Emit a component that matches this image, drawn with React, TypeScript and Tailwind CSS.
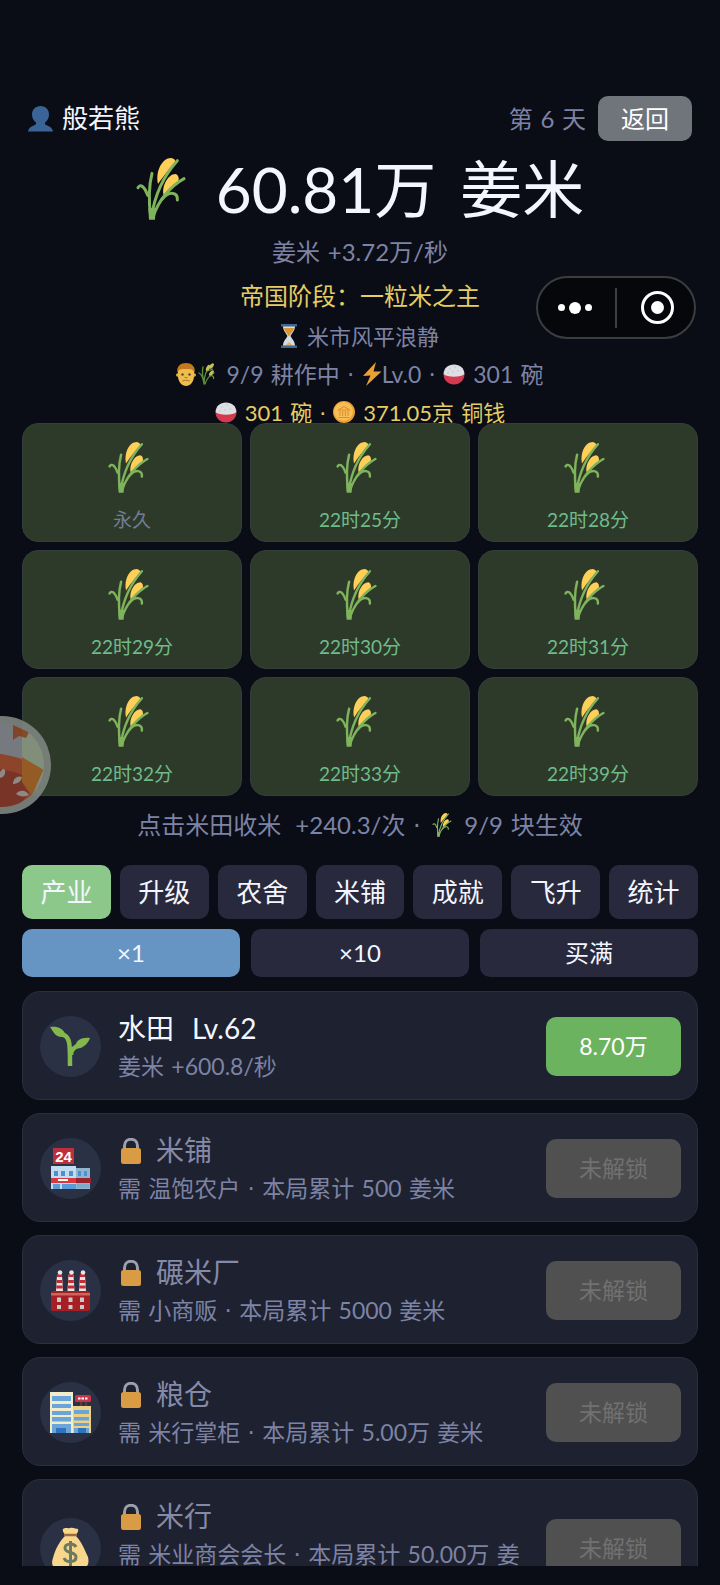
import { Fragment, useState } from "react";
import type { ReactNode } from "react";

type IconProps = { className?: string };

// words separated by a slightly wider blank than Lato's own
function Words({ children }: { children: string }) {
  return (
    <>
      {children.split(/( · | )/).map((part, i) =>
        part.trim() === "" || part === " · " ? (
          <span key={i} className="font-['DejaVu_Sans',sans-serif] leading-none">
            {part}
          </span>
        ) : (
          <Fragment key={i}>{part}</Fragment>
        )
      )}
    </>
  );
}

function Wheat({ className }: IconProps) {
  return (
    <svg viewBox="0 0 150 186" className={className} aria-hidden="true">
      <path d="M66 78C58 40 78 0 105 0C114 1 118 6 118 12C104 28 84 52 66 78Z" fill="#ffcf58" />
      <path d="M83 112C76 82 98 48 118 48C127 50 130 60 127 70C112 82 96 98 83 112Z" fill="#ffcf58" />
      <g fill="none" stroke="#7fb35c" strokeWidth="9" strokeLinecap="round">
        <path d="M44 178C38 130 38 85 48 46" />
        <path d="M46 178C56 112 84 52 124 8" />
        <path d="M51 178C66 128 104 84 144 62" />
        <path d="M6 89C12 78 24 82 35 112" />
        <path d="M78 124C102 96 126 104 124 126" />
      </g>
      <path d="M37 150L59 150L57 185L39 185Z" fill="#7fb35c" />
    </svg>
  );
}

function Sheaf({ className }: IconProps) {
  return (
    <svg viewBox="0 0 18 24" className={className} aria-hidden="true">
      <g fill="none" stroke="#5f8f3c" strokeWidth="1.3" strokeLinecap="round">
        <path d="M6 22C5 15 3 12 1 11M6 22C6 13 9 7 13 3M7 22C9 16 12 13 16 11M6 20C4 13 4 9 5 5" />
      </g>
      <g fill="#c9bf5a">
        <ellipse cx="10" cy="6" rx="1.7" ry="3.4" transform="rotate(25 10 6)" />
        <ellipse cx="13.6" cy="4" rx="1.6" ry="3.2" transform="rotate(35 13.6 4)" />
        <ellipse cx="13.4" cy="11" rx="1.6" ry="3.2" transform="rotate(40 13.4 11)" />
      </g>
      <path d="M12 14C15 13 16 15 15.500 17M9 9L15 7" stroke="#6f9b45" strokeWidth="1.200" fill="none" />
    </svg>
  );
}

function Person({ className }: IconProps) {
  return (
    <svg viewBox="0 0 25 26" className={className} aria-hidden="true">
      <path
        d="M12.500 0C17.500 0 21 3.500 21 8.500C21 12 19.500 14.500 17 16.500V18C17 19.500 24.500 20 25 25.500H0C.5 20 8 19.500 8 18V16.500C5.500 14.500 4 12 4 8.500C4 3.500 7.500 0 12.500 0Z"
        fill="#3a6496"
      />
    </svg>
  );
}

function Hourglass({ className }: IconProps) {
  return (
    <svg viewBox="0 0 16 24" className={className} aria-hidden="true">
      <path d="M2 2H14C14 7 11 9 9.500 12C11 15 14 17 14 22H2C2 17 5 15 6.500 12C5 9 2 7 2 2Z" fill="#d5dde2" />
      <path d="M3 4H13C13 7 10 9 8 12.500C6 9 3 7 3 4Z" fill="#d9952f" />
      <path d="M8 13V18L12.500 22H3.500L8 18Z" fill="#e2b566" />
      <path d="M0 0H16V2.500H0ZM0 21.500H16V24H0Z" fill="#3e678f" />
    </svg>
  );
}

function Farmer({ className }: IconProps) {
  return (
    <svg viewBox="0 0 20 23" className={className} aria-hidden="true">
      <circle cx="1.700" cy="12" r="1.700" fill="#e0ac3c" />
      <circle cx="18.300" cy="12" r="1.700" fill="#e0ac3c" />
      <path d="M2 8C2 3 5 1 10 1S18 3 18 8V13C18 19 14 23 10 23S2 19 2 13Z" fill="#eebd4e" />
      <path d="M1.500 10C0 3 5 0 10 0S20 3 18.500 10C17.500 6 15 6 10 6S2.500 6 1.500 10Z" fill="#c27a1c" />
      <circle cx="6.500" cy="11.500" r="1.200" fill="#5c4428" />
      <circle cx="13.500" cy="11.500" r="1.200" fill="#5c4428" />
      <path d="M8.500 14.500H11.500M6.500 18C8 17 12 17 13.500 18" stroke="#b07a25" strokeWidth="1.200" fill="none" />
    </svg>
  );
}

function Bolt({ className }: IconProps) {
  return (
    <svg viewBox="0 0 20 24" className={className} aria-hidden="true">
      <path d="M14 0L1 14L8.500 13.500L4 24L19.500 9.500L11.500 9.500Z" fill="#eb9f35" />
    </svg>
  );
}

function Bowl({ className }: IconProps) {
  return (
    <svg viewBox="0 0 22 21" className={className} aria-hidden="true">
      <path d="M.5 10C.5 16 5 20.500 11 20.500S21.500 16 21.500 10Z" fill="#d33a50" />
      <path d="M.5 10C1 4 5 .5 11 .5S21 4 21.500 10C18 13.500 4 13.500 .5 10Z" fill="#dcdfe3" />
      <path d="M6 5H8M11 3H13M14 7H16M9 8H11M4 9H6" stroke="#c3c7cc" />
    </svg>
  );
}

function Coin({ className }: IconProps) {
  return (
    <svg viewBox="0 0 22 22" className={className} aria-hidden="true">
      <circle cx="11" cy="11" r="11" fill="#e99c34" />
      <circle cx="10.500" cy="10.500" r="9.500" fill="#f8bd55" />
      <path d="M5 9L11 5.500L17 9ZM7 10V15M9.700 10V15M12.300 10V15M15 10V15M5.500 16.500H16.500" stroke="#d98f2e" fill="none" />
    </svg>
  );
}

function Lock({ className }: IconProps) {
  return (
    <svg viewBox="0 0 26 26" className={className} aria-hidden="true">
      <path d="M6.500 12V8C6.500 -1 19.500 -1 19.500 8V12" fill="none" stroke="#9aa1ad" strokeWidth="3" />
      <rect x="3" y="10" width="20" height="16" rx="2.500" fill="#d99c45" />
    </svg>
  );
}

function Seedling() {
  return (
    <svg viewBox="0 0 61 61" className="size-full" aria-hidden="true">
      <g fill="#84b84e">
        <path d="M10 11C17 10 23 12 26 19C28 21 26 22 22 21C15 21 13 15 10 11Z" />
        <path d="M50 22C42 21 36 24 35 31C35 34 46 33 50 22Z" />
      </g>
      <path d="M24 19C30 22 30 28 30 50M31 39C31 34 33 32 39 29" fill="none" stroke="#84b84e" strokeWidth="4.500" />
    </svg>
  );
}

function Store() {
  return (
    <svg viewBox="0 0 61 61" className="size-full" aria-hidden="true">
      <rect x="13" y="10" width="21" height="16" fill="#bd2f3c" />
      <text x="23.500" y="23.500" textAnchor="middle" fontSize="15" fontWeight="700" fontFamily="Liberation Sans" fill="#fff">
        24
      </text>
      <rect x="11" y="28" width="25" height="23" fill="#bfdcf0" />
      <rect x="36" y="30" width="14" height="21" fill="#8fb4cf" />
      <path d="M14 33H18V38H14ZM21 33H25V38H21ZM29 33H33V38H29ZM38 33H41V38H38ZM44 33H47V38H44Z" fill="#4d8fd0" />
      <path d="M11 40H36V45H11Z" fill="#d8393f" />
      <path d="M36 40H51V45H36Z" fill="#9c2230" />
      <path d="M18 42H28" stroke="#fff" strokeWidth="2" />
      <path d="M13 46H20V51H13ZM22 46H36V51H22Z" fill="#5b9ad8" />
      <path d="M37 46H49V50H37Z" fill="#7fa9c9" />
    </svg>
  );
}

function Factory() {
  return (
    <svg viewBox="0 0 61 61" className="size-full" aria-hidden="true">
      {[16, 27.5, 39].map((x) => (
        <g key={x} transform={`translate(${x} 0)`}>
          <path d="M1 15H6L7 31H0Z" fill="#e8e4e2" />
          <path d="M1 14H6V17H1ZM.7 20H6.300V23H.7ZM.3 25.500H6.700V28.500H.3Z" fill="#c42c32" />
          <circle cx="4" cy="12.500" r="2.300" fill="#e4e6e8" />
        </g>
      ))}
      <rect x="11" y="31" width="39" height="20" rx="2" fill="#a51f24" />
      <rect x="11" y="33" width="39" height="2.500" fill="#c9675a" />
      <path
        d="M17 37.500H21V42H17ZM28.500 37.500H32.500V42H28.500ZM40 37.500H44V42H40ZM17 45H21V49H17ZM28.500 45H32.500V49H28.500ZM40 45H44V49H40Z"
        fill="#ccc9c6"
      />
    </svg>
  );
}

function Building() {
  return (
    <svg viewBox="0 0 61 61" className="size-full" aria-hidden="true">
      <path d="M10 10H33V51H10Z" fill="#f1ecc9" />
      <path d="M33 24H51V51H33Z" fill="#ecd184" />
      <path d="M12 14H31V19H12ZM12 22H31V26H12ZM12 29H31V33H12ZM12 35H31V39.500H12ZM12 42H31V51H12Z" fill="#6ba4d8" />
      <path d="M34 28H49V32H34ZM34 35H49V38.500H34ZM34 41H49V44H34ZM34 46H49V51H34Z" fill="#6ba4d8" />
      <path d="M16 46H26V51H16ZM38 46H46V51H38Z" fill="#2f74bd" />
      <rect x="35" y="13" width="16" height="7" rx="1.500" fill="#c93448" />
      <path d="M38 16.500H48" stroke="#fff" strokeWidth="2" strokeDasharray="2.500 1" />
      <path d="M41 20V24M46 20V24" stroke="#a13a48" />
    </svg>
  );
}

function MoneyBag() {
  return (
    <svg viewBox="0 0 61 61" className="size-full" aria-hidden="true">
      <path d="M23 11C26 9 28 11 30 10C33 9 36 11 38 11C39 14 36 16 36 18C42 24 45 33 48 39C50 48 46 53 30 53S10 48 13 40C15 32 19 24 25 18C25 15 22 14 23 11Z" fill="#f8d68c" />
      <path d="M24 17H37" stroke="#9c6a42" strokeWidth="2.500" />
      <path d="M36 29C34 25 25 25 25 30C25 36 36 33 36 39C36 45 26 45 24 40M30.500 23V48" stroke="#6d7a62" strokeWidth="3" fill="none" />
    </svg>
  );
}

function FloatingBall() {
  return (
    <svg viewBox="0 0 98 98" className="size-full" aria-hidden="true">
      <clipPath id="ball">
        <circle cx="49" cy="49" r="42" />
      </clipPath>
      <circle cx="49" cy="49" r="49" fill="#7f857f" />
      <g clipPath="url(#ball)">
        <path d="M0 0H98V98H0Z" fill="#82868a" />
        <path d="M69 0H98V98H69Z" fill="#8a9883" />
        <path d="M60 9L76 16L73 22L66 20L60 24Z" fill="#8d4c2c" />
        <path d="M0 37C30 34 65 36 90 54L78 80L50 98H0Z" fill="#9b4a2d" />
        <path d="M0 56C30 48 60 52 84 66L60 98H0Z" fill="#7d322a" opacity=".7" />
        <path d="M69 41L90 54L79 80L69 66Z" fill="#a05f24" />
      </g>
      <g fill="#9d9792">
        <path d="M46 62C46 55 50 51 52 54C53 59 50 62 46 62Z" />
        <path d="M60 68C60 62 65 59 69 61C68 66 64 68 60 68Z" />
        <path d="M63 78C67 73 73 74 76 79C72 81 67 81 63 78Z" />
      </g>
    </svg>
  );
}

const fields = [
  "永久",
  "22时25分",
  "22时28分",
  "22时29分",
  "22时30分",
  "22时31分",
  "22时32分",
  "22时33分",
  "22时39分",
];

const tabs = ["产业", "升级", "农舍", "米铺", "成就", "飞升", "统计"];
const amounts = ["×1", "×10", "买满"];

type Industry = { name: string; level?: number; desc: string; price?: string; icon: ReactNode };

const industries: Industry[] = [
  { name: "水田", level: 62, desc: "姜米 +600.8/秒", price: "8.70万", icon: <Seedling /> },
  { name: "米铺", desc: "需 温饱农户 · 本局累计 500 姜米", icon: <Store /> },
  { name: "碾米厂", desc: "需 小商贩 · 本局累计 5000 姜米", icon: <Factory /> },
  { name: "粮仓", desc: "需 米行掌柜 · 本局累计 5.00万 姜米", icon: <Building /> },
  { name: "米行", desc: "需 米业商会会长 · 本局累计 50.00万 姜米", icon: <MoneyBag /> },
];

function IndustryCard({ item }: { item: Industry }) {
  const locked = !item.price;
  return (
    <li className="flex shrink-0 items-center gap-[17px] rounded-[18px] border border-[#2b2e3c] bg-[#1e212f] pt-[21px] pr-4 pb-[19px] pl-[17px]">
      <div className="size-[61px] shrink-0 rounded-full bg-[#2a3145]">{item.icon}</div>
      <div className="min-w-0 flex-1">
        <h2 className={`flex items-center text-[28px] leading-[31px] ${locked ? "gap-3 text-[#858aa8]" : "gap-[18px] text-[#f4f6ff]"}`}>
          {locked && <Lock className="size-[26px]" />}
          <span>{item.name}</span>
          {item.level && <span>Lv.{item.level}</span>}
        </h2>
        <p className="mt-2 text-[23px] leading-7 text-[#7d83a5]">
          <Words>{item.desc}</Words>
        </p>
      </div>
      <button
        disabled={locked}
        className={`h-[59px] w-[135px] shrink-0 rounded-[10px] text-[23px] ${
          locked ? "bg-[#505050] text-[#717171]" : "bg-[#6cb35f] text-white"
        }`}
      >
        {item.price ?? "未解锁"}
      </button>
    </li>
  );
}

export default function App() {
  const [tab, setTab] = useState("产业");
  const [amount, setAmount] = useState("×1");

  return (
    <div className="relative flex h-screen flex-col overflow-hidden bg-[#0a0d16] px-[22px] pt-24 pb-[19px] font-['Lato','Noto_Sans_CJK_SC',sans-serif] text-[#7d83a5]">
      <header className="flex h-[45px] shrink-0 items-center justify-between px-1.5">
        <div className="flex items-center gap-[9px] text-[26px] text-[#f4f6ff]">
          <Person className="h-[26px] w-[25px]" />
          <span>般若熊</span>
        </div>
        <div className="flex items-center gap-3 text-2xl">
          <span>
            <Words>第 6 天</Words>
          </span>
          <button className="h-[45px] w-[94px] rounded-[10px] bg-[#70757b] text-white">返回</button>
        </div>
      </header>

      {/* Totals */}
      <h1 className="mt-2 flex shrink-0 items-center justify-center text-[62px] leading-[80px] text-[#f4f6ff]">
        <Wheat className="mr-[30px] h-[62px] w-[50px]" />
        <span className="mr-6">60.81万</span>
        <span>姜米</span>
      </h1>
      <p className="mt-[5px] shrink-0 text-center text-2xl leading-9">
        <Words>姜米 +3.72万/秒</Words>
      </p>
      <p className="mt-2 shrink-0 text-center text-2xl leading-9 text-[#e5cd64]">帝国阶段：一粒米之主</p>
      <p className="mt-[3px] flex h-[38px] shrink-0 items-center justify-center gap-2.5 text-[22px]">
        <Hourglass className="h-6 w-4" />
        米市风平浪静
      </p>
      <p className="flex h-[38px] shrink-0 items-center justify-center text-[23px]">
        <Farmer className="mr-0.5 h-[23px] w-5" />
        <Sheaf className="mr-2.5 h-6 w-[18px]" />
        <span className="whitespace-pre">
          <Words>9/9 耕作中 · </Words>
        </span>
        <Bolt className="h-6 w-5" />
        <span className="whitespace-pre">
          <Words>Lv.0 · </Words>
        </span>
        <Bowl className="mr-2 h-[21px] w-[22px]" />
        <span>
          <Words>301 碗</Words>
        </span>
      </p>
      <p className="flex h-[38px] shrink-0 items-center justify-center text-[22px] text-[#e5cd64]">
        <Bowl className="mr-2 h-[21px] w-[22px]" />
        <span className="whitespace-pre">
          <Words>301 碗 · </Words>
        </span>
        <Coin className="mr-2 size-[22px]" />
        <span>
          <Words>371.05京 铜钱</Words>
        </span>
      </p>

      {/* Rice fields */}
      <div className="relative -mt-2 grid shrink-0 grid-cols-3 gap-2">
        {fields.map((time) => (
          <button
            key={time}
            className="flex h-[119px] flex-col items-center rounded-2xl border border-[#333f3c] bg-[#2d3a2a] pt-[18px] text-[19px] leading-6"
          >
            <Wheat className="mr-2 h-[51px] w-[41px]" />
            <span className={`mt-[15px] ${time === "永久" ? "text-[#737c94]" : "text-[#6fbc8a]"}`}>{time}</span>
          </button>
        ))}
      </div>
      <p className="mt-[11px] flex shrink-0 items-center justify-center text-2xl leading-9">
        <span className="mr-3.5">点击米田收米</span>
        <span className="mr-1 whitespace-pre">
          <Words>+240.3/次 · </Words>
        </span>
        <Wheat className="mr-3 h-6 w-5" />
        <span>
          <Words>9/9 块生效</Words>
        </span>
      </p>

      {/* Tabs */}
      <nav className="mt-[22px] flex shrink-0 gap-[9px]">
        {tabs.map((name) => (
          <button
            key={name}
            onClick={() => setTab(name)}
            className={`h-[54px] flex-1 rounded-[10px] text-[26px] text-[#f4f6ff] ${tab === name ? "bg-[#8cc88a]" : "bg-[#28293c]"}`}
          >
            {name}
          </button>
        ))}
      </nav>
      <div className="mt-2.5 flex shrink-0 gap-[11px]">
        {amounts.map((name) => (
          <button
            key={name}
            onClick={() => setAmount(name)}
            className={`h-12 flex-1 rounded-[10px] text-2xl text-[#f4f6ff] ${amount === name ? "bg-[#6694c3]" : "bg-[#28293c]"}`}
          >
            {name}
          </button>
        ))}
      </div>

      <ul className="mt-3.5 flex min-h-0 flex-1 flex-col gap-[13px] overflow-hidden">
        {industries.map((item) => (
          <IndustryCard key={item.name} item={item} />
        ))}
      </ul>

      {/* Mini program capsule */}
      <div className="absolute top-[276px] right-6 flex h-[63px] w-40 items-center rounded-full border-2 border-[#3c3d41] bg-[#05070b]">
        <button aria-label="更多" className="flex h-full flex-1 items-center justify-center gap-1 pr-1">
          <span className="size-[7px] rounded-full bg-white" />
          <span className="size-3 rounded-full bg-white" />
          <span className="size-[7px] rounded-full bg-white" />
        </button>
        <span className="h-10 w-0.5 bg-[#3c3d41]" />
        <button aria-label="关闭" className="flex h-full flex-1 items-center justify-center pl-1">
          <span className="flex size-[33px] items-center justify-center rounded-full border-[3px] border-white">
            <span className="size-[13px] rounded-full bg-white" />
          </span>
        </button>
      </div>

      <button aria-label="悬浮球" className="absolute top-[716px] -left-[47px] size-[98px] opacity-90">
        <FloatingBall />
      </button>
    </div>
  );
}
